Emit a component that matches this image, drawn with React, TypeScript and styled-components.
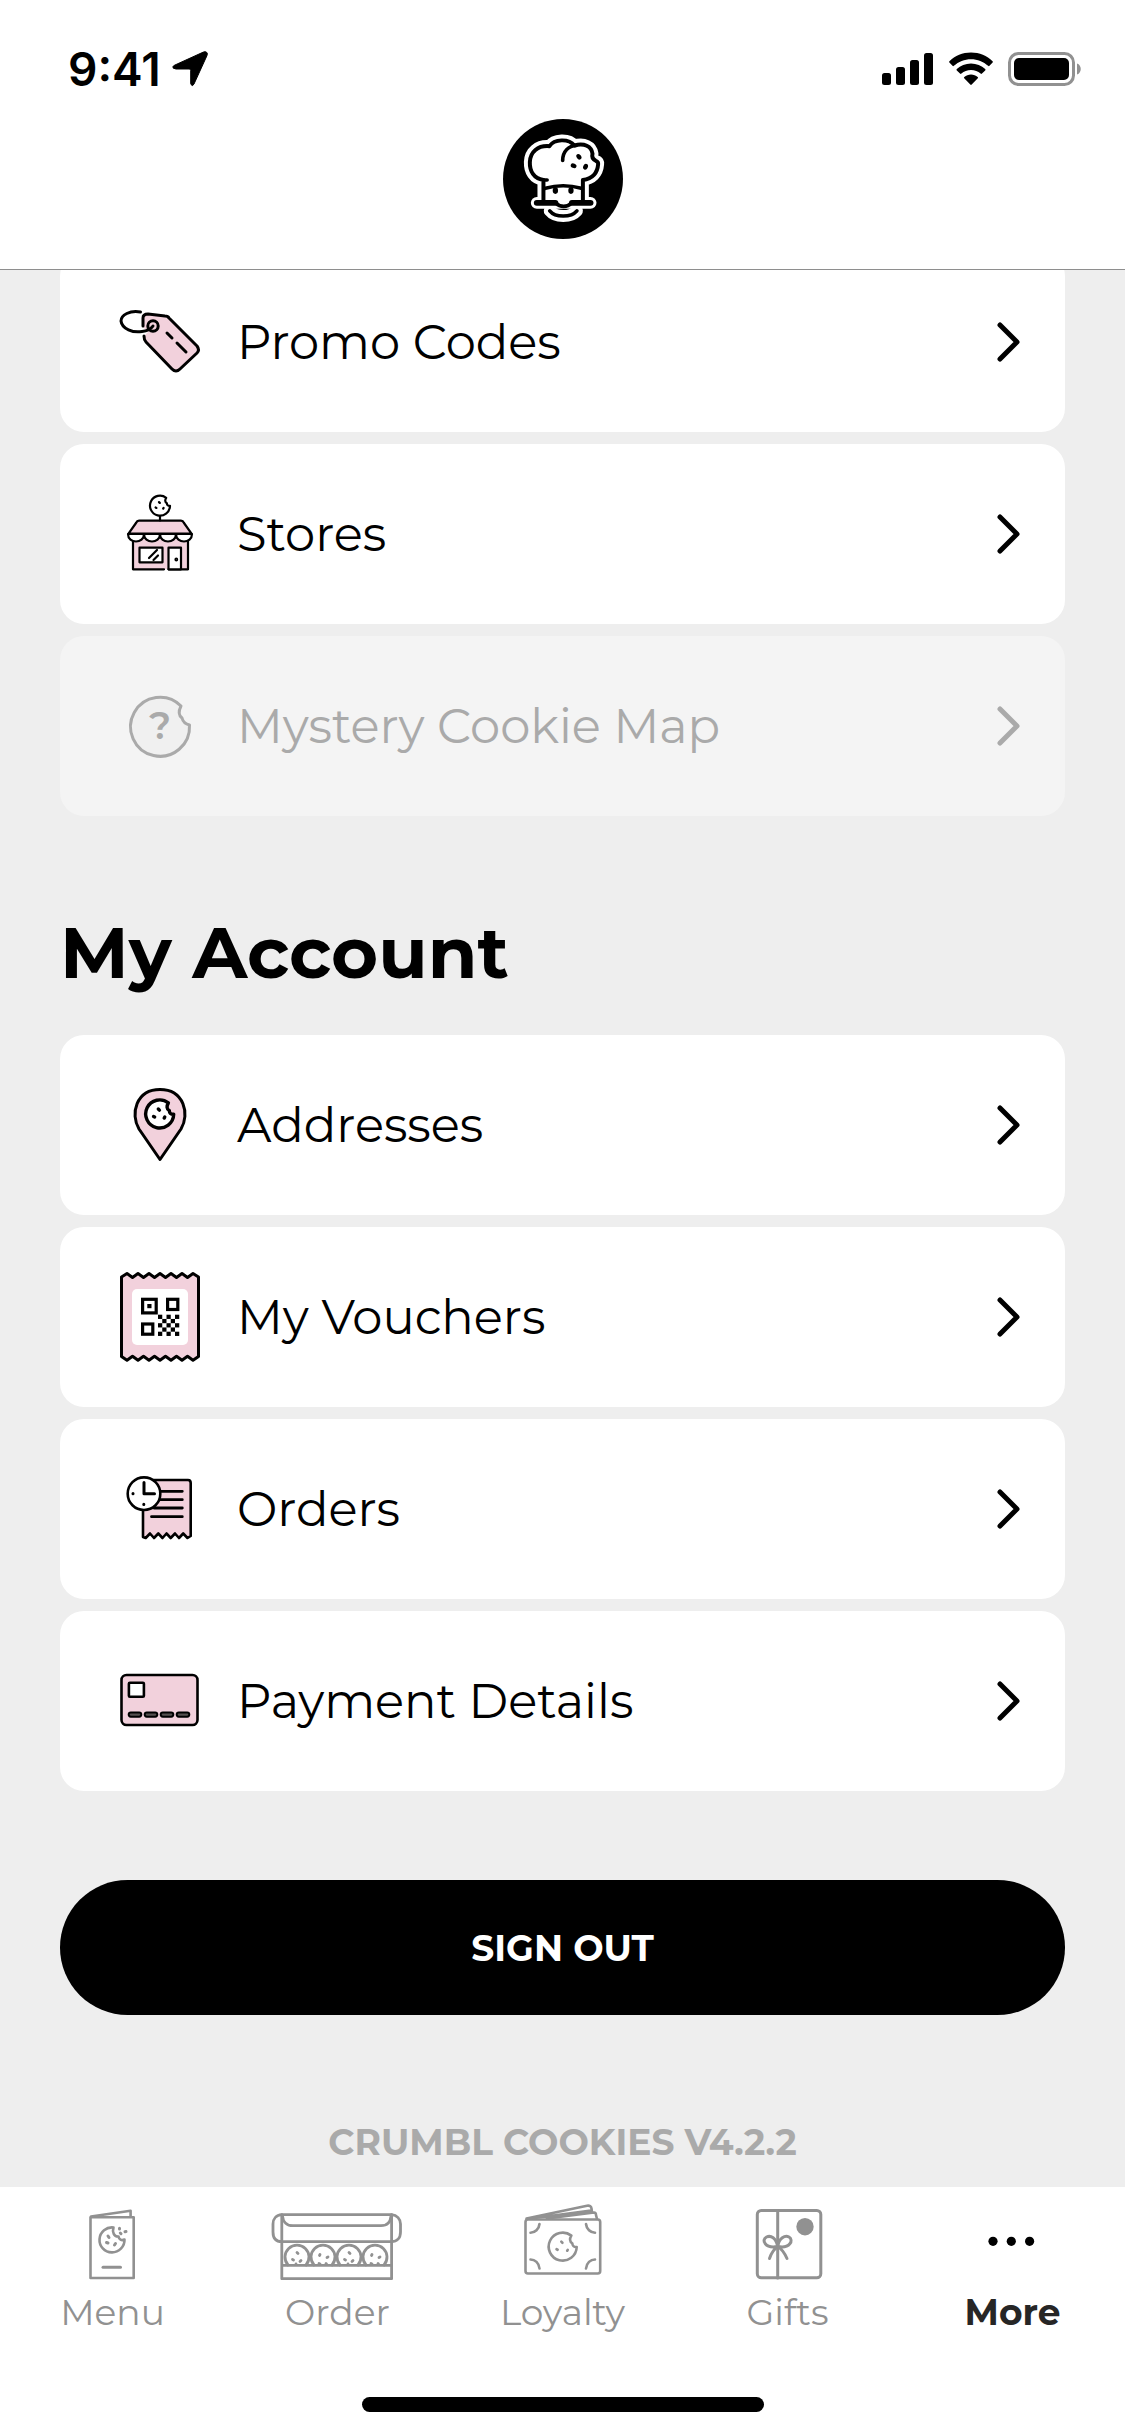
import React from "react";
import styled, { createGlobalStyle, css } from "styled-components";

const PINK = "#f2d1dc";
const MUTED = "#919191";
const DISABLED = "#aaaaaa";

const GlobalStyle = createGlobalStyle`
  *, *::before, *::after { box-sizing: border-box; }
  body {
    margin: 0;
    background: #eeeeee;
    color: #000;
    font-family: Montserrat, Inter, "Liberation Sans", sans-serif;
  }
`;

const Screen = styled.div`
  display: flex;
  flex-direction: column;
  min-height: 100vh;
`;

const Header = styled.header`
  position: relative;
  z-index: 1;
  background: #fff;
  border-bottom: 1px solid #8e8e8e;
  padding-bottom: 30px;
`;

const StatusBar = styled.div`
  display: flex;
  justify-content: space-between;
  align-items: center;
  height: 119px;
  padding: 18px 43px 0 68px;
`;

const StatusGroup = styled.div<{ $gap: number }>`
  display: flex;
  align-items: center;
  gap: ${(p) => p.$gap}px;
`;

const Clock = styled.span`
  font-family: Inter, "Liberation Sans", sans-serif;
  font-size: 46px;
  line-height: 56px;
  font-weight: 600;
`;

const LogoMark = styled.svg`
  display: block;
  width: 120px;
  height: 120px;
  margin: 0 auto;
`;

const Main = styled.main`
  flex: 1;
  padding: 0 60px 23px;
`;

const List = styled.ul<{ $scrolled?: boolean }>`
  display: flex;
  flex-direction: column;
  gap: 12px;
  margin: 0;
  padding: 0;
  list-style: none;
  ${(p) =>
    p.$scrolled &&
    css`
      margin-top: -18px;
    `}
`;

const RowLink = styled.a<{ $disabled?: boolean }>`
  display: flex;
  align-items: center;
  gap: 27px;
  height: 180px;
  padding: 0 45px 0 50px;
  border-radius: 24px;
  text-decoration: none;
  background: ${(p) => (p.$disabled ? "#f4f4f4" : "#fff")};
  color: ${(p) => (p.$disabled ? DISABLED : "#000")};
`;

const RowIcon = styled.svg`
  flex: none;
  width: 100px;
  height: 100px;
  fill: none;
  stroke: currentColor;
  stroke-width: 3;
  stroke-linecap: round;
  stroke-linejoin: round;
`;

const RowLabel = styled.span`
  flex: 1;
  font-size: 48px;
  line-height: 60px;
  font-weight: 400;
`;

const Chevron = styled.svg`
  flex: none;
  width: 24px;
  height: 40px;
  fill: none;
  stroke: currentColor;
  stroke-width: 5;
  stroke-linecap: round;
  stroke-linejoin: round;
`;

const SectionTitle = styled.h2`
  margin: 92px 0 39px;
  font-size: 72px;
  line-height: 88px;
  font-weight: 700;
`;

const SignOut = styled.button`
  display: block;
  width: 100%;
  height: 135px;
  margin-top: 89px;
  border: 0;
  border-radius: 68px;
  background: #000;
  color: #fff;
  font: inherit;
  font-size: 36px;
  font-weight: 700;
`;

const Version = styled.p`
  margin: 105px 0 0;
  text-align: center;
  font-size: 36px;
  line-height: 44px;
  font-weight: 700;
  color: ${DISABLED};
`;

const Footer = styled.footer`
  background: #fff;
  padding-bottom: 24px;
`;

const TabBar = styled.nav`
  display: grid;
  grid-template-columns: repeat(5, 1fr);
  padding-top: 13px;
`;

const Tab = styled.a<{ $active?: boolean }>`
  display: flex;
  flex-direction: column;
  align-items: center;
  gap: 8px;
  text-decoration: none;
  color: ${(p) => (p.$active ? "#262626" : MUTED)};
  font-size: 36px;
  line-height: 48px;
  font-weight: ${(p) => (p.$active ? 700 : 400)};
`;

const TabIcon = styled.svg`
  width: 140px;
  height: 80px;
  fill: none;
  stroke: currentColor;
  stroke-width: 3;
  stroke-linecap: round;
  stroke-linejoin: round;
`;

const HomeIndicator = styled.div`
  width: 402px;
  height: 15px;
  margin: 61px auto 0;
  border-radius: 8px;
  background: #000;
`;

/* A round cookie with a bite out of its upper right, centred on 0,0 with radius 10 */
const COOKIE = "M6.2 -7.9 A10 10 0 1 0 10 0.2 C8 0.4 6.8 -0.8 6.9 -2.4 C4.8 -3.4 4.9 -6 6.2 -7.9 Z";

type CookieProps = { x: number; y: number; r: number; stroke: number; fill?: string };

const Cookie = ({ x, y, r, stroke, fill = "none" }: CookieProps) => {
  const k = r / 10;
  return (
    <g transform={`translate(${x} ${y}) scale(${k})`}>
      <path d={COOKIE} fill={fill} strokeWidth={stroke / k} />
      <path d="M-1 -3.6 L-0.2 -2.8 M-4.4 1.8 L-3.6 2.2 M3.2 2.9 L3.6 2.2" strokeWidth={stroke / k} />
    </g>
  );
};

const PromoIcon = () => (
  <RowIcon viewBox="0 0 100 100" aria-hidden="true">
    <path
      d="M34 44 Q34 48 36 50 L62 77 Q66 81 70 77 L87 61 Q90 58 87 54 L59 26 Q58 24 55 24 L38 22 Q33 22 33 26 V35 L38 40 Z"
      fill={PINK}
      stroke="none"
    />
    <path d="M34 44 Q34 48 36 50 L62 77 Q66 81 70 77 L87 61 Q90 58 87 54 L59 26 Q58 24 55 24 L38 22 Q33 22 33 26 V34" />
    <circle cx="43" cy="34" r="5.2" />
    <path d="M30.5 20 C20 18 11 23 11 29 C12 37 23 41 32 39.5 C37 39 41 37 43 34" />
    <path d="M57 41 L62 46 M67 51 L76 60" />
  </RowIcon>
);

const StoreIcon = () => (
  <RowIcon viewBox="0 0 100 100" aria-hidden="true">
    <g strokeWidth="2.2">
      <path d="M23 52 H78 V85 H23 Z" fill={PINK} stroke="none" />
      <path d="M23 56 V85.3 H54 M78 56 V85.3 H58.5" />
      <rect x="29.5" y="63.7" width="23" height="14.6" fill="#fff" />
      <path d="M39 74 L47 66 M43.5 76 L48 71.5" />
      <path d="M58.5 85.3 V63.7 H71 V85.3 Z" fill="#fff" />
      <circle cx="66.3" cy="75.5" r="0.8" />
      <path
        d="M18 50 C18 60 34 60 34 50 C34 60 50 60 50 50 C50 60 66 60 66 50 C66 60 82 60 82 50 Z"
        fill="#fff"
      />
      <path d="M29 36.7 H71 Q73 36.7 74 39 L81.5 49.7 H18.5 L26 39 Q27 36.7 29 36.7 Z" fill={PINK} />
      <path d="M50 32 V36.5" />
      <Cookie x={50} y={21.7} r={10} stroke={2.2} />
    </g>
  </RowIcon>
);

const MysteryIcon = () => (
  <RowIcon viewBox="0 0 100 100" aria-hidden="true">
    <path d="M71 30 A29.5 29.5 0 1 0 79.5 49 C75 48 73 46 72 42 C68 39 69 34 71 30 Z" fill="#f0f0f0" />
    <text
      x="50"
      y="63"
      textAnchor="middle"
      fill="currentColor"
      stroke="none"
      fontSize="38"
      fontWeight="600"
    >
      ?
    </text>
  </RowIcon>
);

const AddressIcon = () => (
  <RowIcon viewBox="0 0 100 100" aria-hidden="true">
    <path d="M50 84.5 L29 54 C20 39 26 14.5 50 14.5 C74 14.5 80 39 71 54 Z" fill={PINK} />
    <Cookie x={49.7} y={39} r={14} stroke={3.4} fill="#fff" />
  </RowIcon>
);

const VoucherIcon = () => {
  const squares: React.ReactNode[] = [];
  for (let row = 0; row < 5; row++) {
    for (let col = 0; col < 5; col++) {
      if ((row + col) % 2 === 0) {
        squares.push(
          <rect key={`${row}-${col}`} x={48 + col * 4.25} y={47.7 + row * 4.25} width="4.25" height="4.25" />
        );
      }
    }
  }
  return (
    <RowIcon viewBox="0 0 100 100" aria-hidden="true">
      <path
        d="M11.5 10 L17 6.5 L22.5 10.5 L28 6.5 L33.5 10.5 L39 6.5 L44.5 10.5 L50 6.5 L55.5 10.5 L61 6.5 L66.5 10.5 L72 6.5 L77.5 10.5 L83 6.5 L88.5 10 V89.5 L83 93.3 L77.5 89.3 L72 93.3 L66.5 89.3 L61 93.3 L55.5 89.3 L50 93.3 L44.5 89.3 L39 93.3 L33.5 89.3 L28 93.3 L22.5 89.3 L17 93.3 L11.5 89.5 Z"
        fill={PINK}
      />
      <rect x="22" y="22" width="56" height="56" rx="5" fill="#fff" stroke="none" />
      <g strokeLinejoin="miter" strokeWidth="3.2">
        <rect x="32.6" y="32.3" width="13.6" height="13.6" />
        <rect x="57.6" y="32.3" width="10.2" height="10.2" />
        <rect x="32.6" y="57" width="10.2" height="10.2" />
      </g>
      <g fill="currentColor" stroke="none">
        <rect x="37.3" y="37" width="4.2" height="4.2" />
        {squares}
      </g>
    </RowIcon>
  );
};

const OrdersIcon = () => (
  <RowIcon viewBox="0 0 100 100" aria-hidden="true">
    <path
      d="M33 40 V78 L35.7 79 L40 74.5 L44 79 L48.3 74.5 L52.5 79 L56.5 74.5 L60.7 79 L65 74.5 L69 79 L73.2 74.5 L77.5 79 L80.7 77 V24 Q80.7 21 78 21 H40"
      fill={PINK}
      strokeWidth="2.6"
    />
    <path d="M48 32.3 H72.3 M48 40.7 H72.3 M44 49 H72.3 M41.5 57.7 H72.3" strokeWidth="2.8" />
    <circle cx="34" cy="34.7" r="16.3" fill="#fff" strokeWidth="2.6" />
    <path d="M34 23.5 V34.7 H44.5 M23 34.6 V34.8 M33.8 45.2 V45.4" />
  </RowIcon>
);

const PaymentIcon = () => (
  <RowIcon viewBox="0 0 100 100" aria-hidden="true">
    <rect x="11.5" y="24" width="76" height="50" rx="5" fill={PINK} strokeWidth="2.6" />
    <rect x="18.9" y="31.7" width="15" height="14" rx="1" fill="#fff" strokeWidth="2.6" />
    <g fill="#55504f" strokeWidth="2">
      {[18.7, 34.7, 50.7, 66.7].map((x) => (
        <rect key={x} x={x} y="61.5" width="12.6" height="4.2" rx="2.1" />
      ))}
    </g>
  </RowIcon>
);

const MenuTabIcon = () => (
  <TabIcon viewBox="0 0 140 80" aria-hidden="true">
    <g strokeWidth="2.6">
      <path d="M47.5 17.3 H90.7 V78 H47.5 Z M48 16.5 L87.6 10.7 V17" />
      <path d="M70.5 27.5 A12.5 12.5 0 1 0 81.5 39.5 C78.5 41 76 39.5 75.5 36.5 C71 37 69 32 70.5 27.5 Z" />
    </g>
    <path d="M65 36 L66 37.5 M63.5 42.5 L65 43 M71.5 45 L72.5 43.5 M76.5 28.3 V29 M77.3 33 L78 33.7 M82 31.7 L83 31.5" />
    <path d="M60 67.3 H77.5" />
  </TabIcon>
);

const OrderTabIcon = () => (
  <TabIcon viewBox="0 0 140 80" aria-hidden="true">
    <g strokeWidth="2.8">
      <path d="M13.8 14.7 H123.6 V78.7 H13.8 Z M13.8 41.7 H123.6 M13.8 65.3 H123.6" />
      <path d="M13.8 14.7 C8 15 5 19 5 24 V32 C5 38 8 41.7 13.8 41.7 M123.6 14.7 C129 15 132.5 19 132.5 24 V32 C132.5 38 129 41.7 123.6 41.7" />
      <path d="M14.5 16 C15 22 19 25.7 25 25.7 H113 C119 25.7 122.5 22 123 16" />
      {[29, 55, 81, 107].map((x, i) => (
        <g key={x} transform={`translate(${x} 57.5)`}>
          <path d="M-9 7.5 A12 12 0 1 1 9 7.5" />
          <path
            d={
              i % 2 === 0
                ? "M0 -5 L1 -4 M-4.5 2 L-3.5 2.5 M3 4 L4 3 M-1 6.5 V7"
                : "M-3 -3 L-3.5 -2 M4 0 L5 -0.5 M-4 6 L-3 6.5 M3 6 L3.5 6.5"
            }
          />
        </g>
      ))}
    </g>
  </TabIcon>
);

const LoyaltyTabIcon = () => (
  <TabIcon viewBox="0 0 140 80" aria-hidden="true">
    <g strokeWidth="2.6">
      <rect x="32.5" y="19.5" width="74.7" height="54" rx="2.5" />
      <path d="M33.5 18.5 L94 5.7 Q98 5 98.5 8.5 L99 12.5 M54 18.5 L101 12.5 Q103 12.5 103 15 L104 19 M38 18.5 L98 10.5" />
      <path d="M46.5 24 C46 29 42 32.7 37.5 32.7 M93 24 C93.5 29 97.5 32.7 102 32.7 M37.5 59.5 C42 59.5 46 63 46.5 68.5 M102 59.5 C97.5 59.5 93.5 63 93 68.5" />
      <Cookie x={69.7} y={46.7} r={14} stroke={2.6} />
    </g>
  </TabIcon>
);

const GiftsTabIcon = () => (
  <TabIcon viewBox="0 0 140 80" aria-hidden="true">
    <rect x="39.3" y="10.5" width="63.5" height="67.3" rx="4" />
    <path d="M59.7 11 V78" />
    <circle cx="87" cy="26.7" r="8.7" fill="currentColor" stroke="none" />
    <path d="M59.7 46.5 C58 38 53 35 48.5 37 C43 40 47 49 59.7 46.5 C61 38 67 35 71 37 C76 40 72 49 59.7 46.5 M59.5 47 C56 49 53 54 51.5 58.5 M60 47 C64 49 67 54 69 58.5" />
  </TabIcon>
);

const MoreTabIcon = () => (
  <TabIcon viewBox="0 0 140 80" aria-hidden="true">
    <g fill="#000" stroke="none">
      <circle cx="50" cy="41.3" r="4.6" />
      <circle cx="68.3" cy="41.3" r="4.6" />
      <circle cx="86.6" cy="41.3" r="4.6" />
    </g>
  </TabIcon>
);

const HAT =
  "M189 306 V242 C160 238 147 215 148 188 C149 158 172 137 207 140 C222 118 265 116 282 138 C312 130 334 140 337 163 C334 174 341 181 347 184 Q355 187 354 194 C352 222 335 238 308 242 V306";

const Logo = () => (
  <LogoMark viewBox="67 58 362 362" role="img" aria-label="Crumbl Cookies" fill="none" strokeLinecap="round" strokeLinejoin="round">
    <circle cx="248" cy="239" r="181" fill="#000" />
    <g stroke="#fff" strokeWidth="36">
      <path d={HAT} />
      <path d="M169 311 H331" />
      <path d="M208 335 C225 356 272 356 290 335" />
    </g>
    <path d={HAT} fill="#fff" stroke="#000" strokeWidth="12" />
    <g stroke="#000" strokeWidth="11">
      <path d="M169 311 H225 C240 325 260 325 275 311 H331" />
      <path d="M208 335 C225 356 272 356 290 335" />
      <path d="M247 183 C247 156 265 138 288 138" />
      <path d="M195 267 Q248 252 303 267" />
      <path d="M189 242 H200" />
    </g>
    <path d="M169 311 H225 M275 311 H331" stroke="#000" strokeWidth="18" />
    <g fill="#000">
      <ellipse cx="225" cy="274" rx="8" ry="10" />
      <ellipse cx="272" cy="274" rx="8" ry="10" />
      <ellipse cx="296" cy="172" rx="7" ry="9" transform="rotate(-35 296 172)" />
      <ellipse cx="280" cy="199" rx="7" ry="9" transform="rotate(-65 280 199)" />
      <ellipse cx="316" cy="202" rx="7" ry="9" transform="rotate(25 316 202)" />
    </g>
  </LogoMark>
);

const LocationArrow = () => (
  <svg width="36" height="36" viewBox="0 0 36 36" aria-hidden="true">
    <path d="M34.5 1.2 Q36 2 35 4.5 L22 33 Q20.5 36 19 33.5 Q18.7 33 18.7 32 V19.5 Q18.7 18 17.2 18 H4 Q0 17.5 1 15.5 Q1.4 14.7 3 14 L31.5 1 Q33.5 0.2 34.5 1.2 Z" stroke="#000" strokeWidth="1" />
  </svg>
);

const Signal = () => (
  <svg width="52" height="33" viewBox="0 0 52 33" aria-hidden="true">
    <rect x="0" y="21" width="9" height="12" rx="2.5" />
    <rect x="14" y="15" width="9" height="18" rx="2.5" />
    <rect x="28" y="8" width="9" height="25" rx="2.5" />
    <rect x="42" y="1" width="9" height="32" rx="2.5" />
  </svg>
);

const Wifi = () => (
  <svg width="46" height="34" viewBox="0 0 46 34" aria-hidden="true">
    <path d="M23 0.5 C31.5 0.5 39 3.8 44.6 9.2 Q45.3 9.9 44.6 10.6 L41.5 13.8 Q40.8 14.5 40.1 13.8 C35.5 9.7 29.5 7.2 23 7.2 C16.5 7.2 10.5 9.7 5.9 13.8 Q5.2 14.5 4.5 13.8 L1.4 10.6 Q0.7 9.9 1.4 9.2 C7 3.8 14.5 0.5 23 0.5 Z" />
    <path d="M23 11.5 C28.5 11.5 33.5 13.6 37.2 17 Q37.9 17.7 37.2 18.4 L34 21.6 Q33.3 22.3 32.6 21.6 C30 19.4 26.7 18.1 23 18.1 C19.3 18.1 16 19.4 13.4 21.6 Q12.7 22.3 12 21.6 L8.8 18.4 Q8.1 17.7 8.8 17 C12.5 13.6 17.5 11.5 23 11.5 Z" />
    <path d="M23 22.5 C25.5 22.5 27.9 23.4 29.7 24.9 Q30.5 25.6 29.8 26.3 L23.7 32.6 Q23 33.3 22.3 32.6 L16.2 26.3 Q15.5 25.6 16.3 24.9 C18.1 23.4 20.5 22.5 23 22.5 Z" />
  </svg>
);

const Battery = () => (
  <svg width="74" height="34" viewBox="0 0 74 34" aria-hidden="true">
    <rect x="1.5" y="1.5" width="64" height="31" rx="9" fill="none" stroke="#919191" strokeWidth="3" />
    <rect x="6" y="6" width="55" height="22" rx="5" />
    <path d="M69 11.5 C74 13 74 21 69 22.5 Z" fill="#919191" />
  </svg>
);

type Item = { label: string; icon: () => React.ReactElement; disabled?: boolean };

const topItems: Item[] = [
  { label: "Promo Codes", icon: PromoIcon },
  { label: "Stores", icon: StoreIcon },
  { label: "Mystery Cookie Map", icon: MysteryIcon, disabled: true },
];

const accountItems: Item[] = [
  { label: "Addresses", icon: AddressIcon },
  { label: "My Vouchers", icon: VoucherIcon },
  { label: "Orders", icon: OrdersIcon },
  { label: "Payment Details", icon: PaymentIcon },
];

const tabs: Item[] = [
  { label: "Menu", icon: MenuTabIcon },
  { label: "Order", icon: OrderTabIcon },
  { label: "Loyalty", icon: LoyaltyTabIcon },
  { label: "Gifts", icon: GiftsTabIcon },
  { label: "More", icon: MoreTabIcon },
];

const Row = ({ label, icon: Icon, disabled }: Item) => (
  <li>
    <RowLink href="#" $disabled={disabled} aria-disabled={disabled}>
      <Icon />
      <RowLabel>{label}</RowLabel>
      <Chevron viewBox="0 0 24 40" aria-hidden="true">
        <path d="M4 3 L21 20 L4 37" />
      </Chevron>
    </RowLink>
  </li>
);

export default function App() {
  return (
    <Screen>
      <GlobalStyle />
      <Header>
        <StatusBar>
          <StatusGroup $gap={11}>
            <Clock>9:41</Clock>
            <LocationArrow />
          </StatusGroup>
          <StatusGroup $gap={14}>
            <Signal />
            <Wifi />
            <Battery />
          </StatusGroup>
        </StatusBar>
        <Logo />
      </Header>
      <Main>
        <List $scrolled>
          {topItems.map((item) => (
            <Row key={item.label} {...item} />
          ))}
        </List>
        <SectionTitle>My Account</SectionTitle>
        <List>
          {accountItems.map((item) => (
            <Row key={item.label} {...item} />
          ))}
        </List>
        <SignOut type="button">SIGN OUT</SignOut>
        <Version>CRUMBL COOKIES V4.2.2</Version>
      </Main>
      <Footer>
        <TabBar aria-label="Main">
          {tabs.map(({ label, icon: Icon }) => (
            <Tab key={label} href="#" $active={label === "More"} aria-current={label === "More" ? "page" : undefined}>
              <Icon />
              {label}
            </Tab>
          ))}
        </TabBar>
        <HomeIndicator />
      </Footer>
    </Screen>
  );
}
